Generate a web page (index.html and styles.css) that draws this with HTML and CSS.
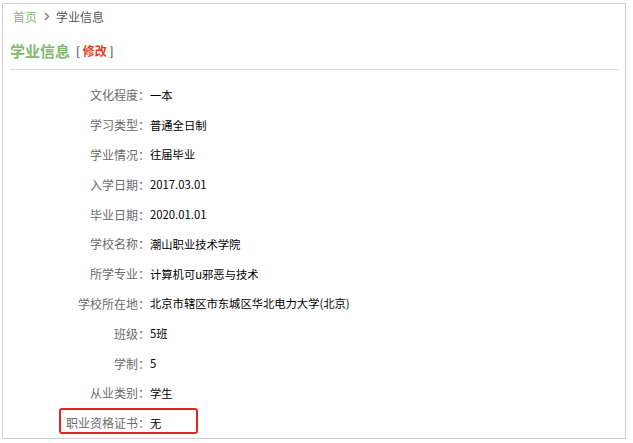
FILE: index.html
```html
<!DOCTYPE html>
<html lang="zh-CN">
<head>
<meta charset="utf-8">
<title>学业信息</title>
<link rel="stylesheet" href="styles.css">
</head>
<body>
<div class="panel">
  <div class="crumbs">
    <a class="crumb-home">首页</a>
    <svg class="crumb-sep" width="6" height="9" viewBox="0 0 6 9"><path d="M1 1 L4.5 4.5 L1 8" fill="none" stroke="#8a8a8a" stroke-width="1.6"/></svg>
    <span class="crumb-cur">学业信息</span>
  </div>
  <div class="title-bar">
    <h2 class="title">学业信息</h2>
    <span class="edit"><span class="br">[</span> <a class="edit-link">修改</a> <span class="br">]</span></span>
  </div>
  <div class="rows">
    <div class="row"><span class="label">文化程度：</span><span class="value">一本</span></div>
    <div class="row"><span class="label">学习类型：</span><span class="value">普通全日制</span></div>
    <div class="row"><span class="label">学业情况：</span><span class="value">往届毕业</span></div>
    <div class="row"><span class="label">入学日期：</span><span class="value">2017.03.01</span></div>
    <div class="row"><span class="label">毕业日期：</span><span class="value">2020.01.01</span></div>
    <div class="row"><span class="label">学校名称：</span><span class="value">潮山职业技术学院</span></div>
    <div class="row"><span class="label">所学专业：</span><span class="value">计算机可u邪恶与技术</span></div>
    <div class="row"><span class="label">学校所在地：</span><span class="value">北京市辖区市东城区华北电力大学(北京)</span></div>
    <div class="row"><span class="label">班级：</span><span class="value">5班</span></div>
    <div class="row"><span class="label">学制：</span><span class="value">5</span></div>
    <div class="row"><span class="label">从业类别：</span><span class="value">学生</span></div>
    <div class="row row-mark"><span class="label">职业资格证书：</span><span class="value">无</span></div>
  </div>
</div>
</body>
</html>
```

FILE: styles.css
```css
html, body {
  margin: 0;
  padding: 0;
  background: #fff;
}
body {
  font-family: "Noto Sans CJK SC", sans-serif;
  font-size: 12px;
  color: #333;
}
.panel {
  margin: 3px 0 0 2px;
  width: 624px;
  border: 1px solid #cfcfcf;
  box-sizing: border-box;
}
.crumbs {
  display: flex;
  align-items: center;
  height: 24px;
  padding-left: 10px;
  font-size: 12px;
}
.crumb-home {
  color: #86bb74;
}
.crumb-sep {
  margin: 0 6px 0 7px;
}
.crumb-cur {
  color: #555;
}
.title-bar {
  display: flex;
  align-items: center;
  margin: 7px 6px 0 7px;
  height: 30px;
  padding-bottom: 4px;
  border-bottom: 1px solid #dcdcdc;
}
.title {
  margin: 0;
  font-size: 15px;
  font-weight: bold;
  color: #82b970;
}
.edit {
  margin-left: 6px;
  font-size: 12px;
}
.br {
  color: #333;
}
.edit-link {
  color: #e0401c;
  font-weight: bold;
}
.rows {
  margin-top: 10px;
  display: flex;
  flex-direction: column;
}
.row {
  position: relative;
  display: flex;
  align-items: center;
  height: 29.8px;
}
.label {
  width: 147px;
  text-align: right;
  color: #6a6a6a;
}
.value {
  font-size: 11.3px;
  color: #000;
}
.row-mark::after {
  content: "";
  position: absolute;
  left: 56px;
  top: 0;
  width: 135px;
  height: 22px;
  border: 2px solid #e8231e;
  border-radius: 3px;
}
```
